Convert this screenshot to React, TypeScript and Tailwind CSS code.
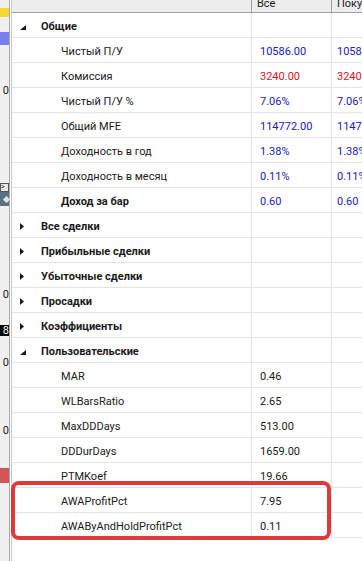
type Row = {
  label: string;
  level: 0 | 1;
  bold?: boolean;
  tree?: 'open' | 'closed';
  v1?: string;
  v2?: string;
  tone?: 'blue' | 'red' | 'black';
};

const rows: Row[] = [
  { label: 'Общие', level: 0, bold: true, tree: 'open' },
  { label: 'Чистый П/У', level: 1, v1: '10586.00', v2: '10586.00', tone: 'blue' },
  { label: 'Комиссия', level: 1, v1: '3240.00', v2: '3240.00', tone: 'red' },
  { label: 'Чистый П/У %', level: 1, v1: '7.06%', v2: '7.06%', tone: 'blue' },
  { label: 'Общий MFE', level: 1, v1: '114772.00', v2: '114772.00', tone: 'blue' },
  { label: 'Доходность в год', level: 1, v1: '1.38%', v2: '1.38%', tone: 'blue' },
  { label: 'Доходность в месяц', level: 1, v1: '0.11%', v2: '0.11%', tone: 'blue' },
  { label: 'Доход за бар', level: 1, bold: true, v1: '0.60', v2: '0.60', tone: 'blue' },
  { label: 'Все сделки', level: 0, bold: true, tree: 'closed' },
  { label: 'Прибыльные сделки', level: 0, bold: true, tree: 'closed' },
  { label: 'Убыточные сделки', level: 0, bold: true, tree: 'closed' },
  { label: 'Просадки', level: 0, bold: true, tree: 'closed' },
  { label: 'Коэффициенты', level: 0, bold: true, tree: 'closed' },
  { label: 'Пользовательские', level: 0, bold: true, tree: 'open' },
  { label: 'MAR', level: 1, v1: '0.46', tone: 'black' },
  { label: 'WLBarsRatio', level: 1, v1: '2.65', tone: 'black' },
  { label: 'MaxDDDays', level: 1, v1: '513.00', tone: 'black' },
  { label: 'DDDurDays', level: 1, v1: '1659.00', tone: 'black' },
  { label: 'PTMKoef', level: 1, v1: '19.66', tone: 'black' },
  { label: 'AWAProfitPct', level: 1, v1: '7.95', tone: 'black' },
  { label: 'AWAByAndHoldProfitPct', level: 1, v1: '0.11', tone: 'black' },
];

const toneClass = {
  blue: 'text-[#2020bc]',
  red: 'text-[#e0141e]',
  black: 'text-[#1a1a1a]',
};

function TreeIcon({ kind }: { kind: 'open' | 'closed' }) {
  if (kind === 'open') {
    return (
      <svg width="6" height="5" viewBox="0 0 6 5" className="mt-[5px]">
        <polygon points="6,0 6,5 0,5" fill="#1a1a1a" />
      </svg>
    );
  }
  return (
    <svg width="4" height="7" viewBox="0 0 4 7" className="mt-[3px]">
      <polygon points="0,0 4,3.5 0,7" fill="#1a1a1a" />
    </svg>
  );
}

// partial column of the neighbouring panel, cut off at the left edge
function LeftStrip() {
  return (
    <div className="flex w-[12px] shrink-0">
      <div className="flex w-[9px] flex-col bg-[#f0f0f0] text-[11px] leading-[10px] text-[#222]">
        <div className="mt-[8px] h-[9px] bg-[#f5d832]" />
        <div className="mt-[15px] h-[13px] bg-[#7b7bf2]" />
        <div className="mt-[41px] flex h-[10px] justify-end overflow-hidden">0</div>
        <div className="mt-[87px] h-[9px] border border-[#555] bg-[#e8e8e8] text-[7px] leading-[7px]">&gt;</div>
        <div className="flex h-[14px] items-center justify-end bg-[#5c7282]">
          <span className="block h-[5px] w-[5px] rotate-45 bg-[#dfe5e9]" />
        </div>
        <div className="mt-[84px] flex h-[10px] justify-end overflow-hidden">0</div>
        <div className="mt-[25px] flex h-[11px] items-center justify-end overflow-hidden bg-black text-white">8</div>
        <div className="mt-[22px] flex h-[10px] justify-end overflow-hidden">0</div>
        <div className="mt-[58px] flex h-[10px] justify-end overflow-hidden">0</div>
        <div className="mt-[32px] h-[15px] bg-[#d25656]" />
      </div>
      <div className="w-[1px] bg-[#a9a9a9]" />
      <div className="w-[1px] bg-white" />
      <div className="w-[1px] bg-[#c8c8c8]" />
    </div>
  );
}

export default function App() {
  return (
    <div
      className="flex h-[561px] w-[362px] overflow-hidden bg-white"
      style={{ fontFamily: 'Roboto, "Liberation Sans", sans-serif' }}
    >
      <LeftStrip />
      <div className="relative min-w-0 flex-1">
        <div className="flex h-[13px] overflow-hidden border-b border-[#a0a0a0] bg-[#ededed] text-[11px] leading-[13px] text-[#1a1a1a]">
          <div className="w-[239px] shrink-0" />
          <div className="-mt-[3px] w-[80px] shrink-0 border-l border-[#a0a0a0] pl-[5px]">Все</div>
          <div className="-mt-[3px] w-[80px] shrink-0 border-l border-[#a0a0a0] pl-[5px]">Покупки</div>
        </div>
        {rows.map((r) => (
          <div key={r.label} className="flex h-[25px] border-b border-[#e3e3e3] text-[11px] leading-[13px] text-[#1a1a1a]">
            <div className={`flex w-[239px] shrink-0 items-start pt-[7px] ${r.bold ? 'font-bold' : ''}`}>
              {r.level === 0 ? (
                <>
                  <div className="flex w-[29px] pl-[8px]">{r.tree && <TreeIcon kind={r.tree} />}</div>
                  <span className="whitespace-nowrap">{r.label}</span>
                </>
              ) : (
                <span className="whitespace-nowrap pl-[49px]">{r.label}</span>
              )}
            </div>
            <div className={`w-[80px] shrink-0 border-l border-[#e3e3e3] pl-[8px] pt-[7px] ${r.tone ? toneClass[r.tone] : ''}`}>
              {r.v1}
            </div>
            <div className={`w-[80px] shrink-0 border-l border-[#e3e3e3] pl-[5px] pt-[7px] ${r.tone ? toneClass[r.tone] : ''}`}>
              {r.v2}
            </div>
          </div>
        ))}
        <div className="pointer-events-none absolute left-[-1px] top-[481px] h-[59px] w-[320px] rounded-[8px] border-[4px] border-[#de3a3a]" />
      </div>
    </div>
  );
}
